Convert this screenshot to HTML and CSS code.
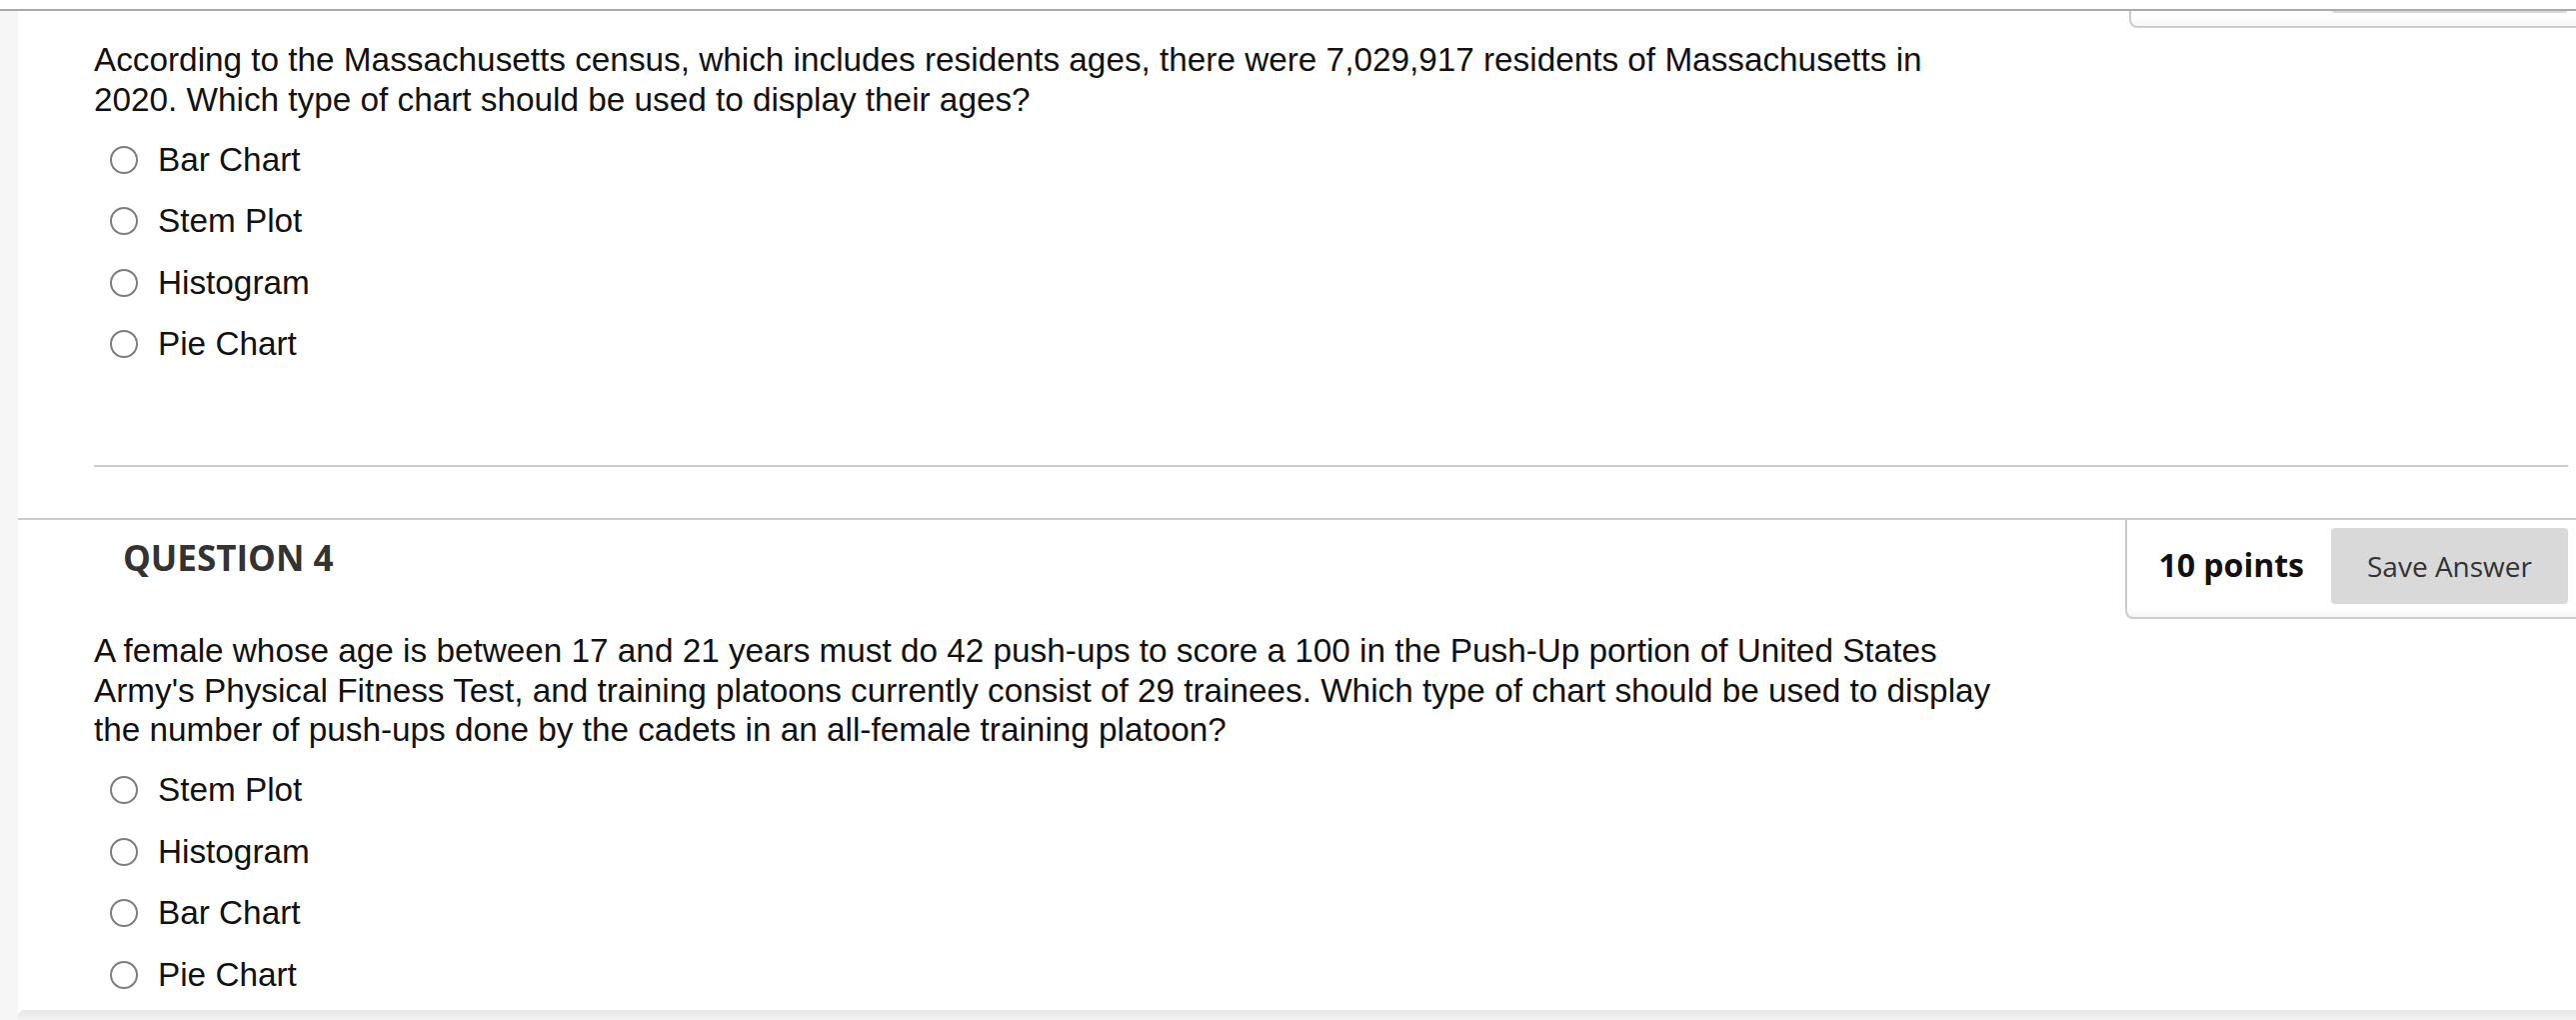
FILE: index.html
```html
<!DOCTYPE html>
<html>
<head>
  <title>Take Test</title>
  <link rel="stylesheet" href="styles.css">
</head>
<body>
  <div class="topbar"></div>
  <div class="page">
    <div class="viewport">
      <div class="assessment">

        <!-- question 3 header is scrolled up under the top bar -->
        <div class="question">
          <div class="q-head">
            <div class="q-title"></div>
            <div class="q-points">
              <button class="save-btn"></button>
            </div>
          </div>
          <div class="q-body">
            <p class="q-text">According to the Massachusetts census, which includes residents ages, there were 7,029,917 residents of Massachusetts in 2020. Which type of chart should be used to display their ages?</p>
            <ul class="choices">
              <li><span class="radio"></span>Bar Chart</li>
              <li><span class="radio"></span>Stem Plot</li>
              <li><span class="radio"></span>Histogram</li>
              <li><span class="radio"></span>Pie Chart</li>
            </ul>
            <div class="q-end"></div>
          </div>
        </div>

        <div class="question">
          <div class="q-head">
            <h3 class="q-title">QUESTION 4</h3>
            <div class="q-points">
              <span class="points">10 points</span>
              <button class="save-btn">Save Answer</button>
            </div>
          </div>
          <div class="q-body">
            <p class="q-text">A female whose age is between 17 and 21 years must do 42 push-ups to score a 100 in the Push-Up portion of United States Army's Physical Fitness Test, and training platoons currently consist of 29 trainees. Which type of chart should be used to display the number of push-ups done by the cadets in an all-female training platoon?</p>
            <ul class="choices">
              <li><span class="radio"></span>Stem Plot</li>
              <li><span class="radio"></span>Histogram</li>
              <li><span class="radio"></span>Bar Chart</li>
              <li><span class="radio"></span>Pie Chart</li>
            </ul>
            <div class="q-end"></div>
          </div>
        </div>

      </div>
    </div>
    <div class="bottombar"></div>
  </div>
</body>
</html>
```

FILE: styles.css
```css
html, body {
  margin: 0;
  height: 100%;
}

body {
  font-family: "Liberation Sans", Arial, sans-serif;
  background-color: #f6f6f6;
  color: #111111;
  display: flex;
  flex-direction: column;
  overflow: hidden;
}

.topbar {
  height: 9px;
  background-color: #ffffff;
  border-bottom: 2px solid #aaaaaa;
  flex-shrink: 0;
}

.page {
  flex: 1;
  margin-left: 18px;
  background-color: #ffffff;
  display: flex;
  flex-direction: column;
  min-height: 0;
}

.viewport {
  flex: 1;
  overflow: hidden;
}

/* scrolled so that question 3's header sits under the top bar */
.assessment {
  margin-top: -84px;
}

.bottombar {
  height: 10px;
  flex-shrink: 0;
  background: linear-gradient(#e6e6e6, #f3f3f3);
  border-top-left-radius: 6px;
}

.question {
  border-top: 2px solid #cccccc;
}

.q-head {
  display: flex;
  justify-content: space-between;
  align-items: flex-start;
}

.q-title {
  margin: 20px 0 0 105px;
  font-family: "Open Sans", sans-serif;
  font-size: 35px;
  line-height: 35px;
  font-weight: bold;
  color: #333333;
}

.q-points {
  display: flex;
  align-items: baseline;
  gap: 27px;
  padding: 8px 8px 13px 31px;
  border: 2px solid #cccccc;
  border-top: none;
  border-right: none;
  border-bottom-left-radius: 8px;
  box-shadow: inset 0 -8px 8px -6px rgba(0, 0, 0, 0.06);
}

.points {
  font-family: "Open Sans", sans-serif;
  font-size: 32px;
  font-weight: bold;
  color: #111111;
}

.save-btn {
  width: 237px;
  height: 76px;
  border: none;
  border-radius: 4px;
  background-color: #d9d9d9;
  color: #333333;
  font-family: "Open Sans", sans-serif;
  font-size: 28px;
  padding: 0;
}

.q-points .save-btn:only-child {
  margin-left: 169px;
}

.q-body {
  padding: 12px 8px 0 76px;
}

.q-text {
  margin: 0;
  max-width: 1910px;
  font-size: 33.3px;
  line-height: 39.5px;
}

.choices {
  list-style: none;
  margin: 10px 0 0 0;
  padding: 0 0 0 16px;
}

.choices li {
  height: 61.5px;
  display: flex;
  align-items: center;
  font-size: 33.3px;
}

.radio {
  width: 28px;
  height: 28px;
  box-sizing: border-box;
  border: 2px solid #7d7d7d;
  border-radius: 50%;
  margin-right: 20px;
  flex-shrink: 0;
}

.q-end {
  margin-top: 90px;
  margin-bottom: 51px;
  border-top: 2px solid #cccccc;
}
```
